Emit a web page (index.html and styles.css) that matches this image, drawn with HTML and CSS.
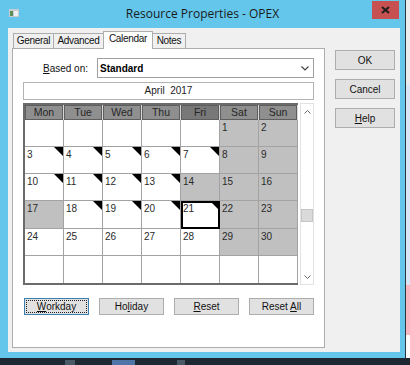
FILE: index.html
```html
<!DOCTYPE html>
<html lang="en">
<head>
  <meta charset="UTF-8">
  <title>Resource Properties - OPEX</title>
  <link rel="stylesheet" href="styles.css">
</head>
<body>

  <div class="screen">
    <div class="window">
      <div class="titlebar">
        <div class="title-left">
          <svg class="app-icon" width="10" height="8" viewBox="0 0 10 8">
            <rect x="0" y="0" width="10" height="8" fill="#c9cdd1"/>
            <rect x="1" y="2" width="3" height="5" fill="#5c8f5a"/>
            <rect x="5" y="2" width="4" height="5" fill="#eef0f2"/>
          </svg>
        </div>
        <div class="title">Resource Properties - OPEX</div>
        <div class="title-right">
          <div class="close">
            <svg width="9" height="8" viewBox="0 0 9 8">
              <path d="M1 1 L8 7 M8 1 L1 7" stroke="#1e1e1e" stroke-width="2"/>
            </svg>
          </div>
        </div>
      </div>

      <div class="client">
        <div class="tab-area">
          <div class="tabs">
            <div class="tab tab-general">General</div>
            <div class="tab tab-advanced">Advanced</div>
            <div class="tab tab-calendar active">Calendar</div>
            <div class="tab tab-notes">Notes</div>
          </div>

          <div class="panel">
            <div class="based-row">
              <label class="based-label"><u>B</u>ased on:</label>
              <div class="combo">
                <span class="combo-value">Standard</span>
                <svg class="chevron" width="8" height="5" viewBox="0 0 8 5">
                  <path d="M0.5 0.5 L4 4 L7.5 0.5" fill="none" stroke="#444" stroke-width="1.2"/>
                </svg>
              </div>
            </div>

            <div class="month">April&nbsp; 2017</div>

            <div class="cal-wrap">
              <div class="calendar">
                <div class="head">Mon</div>
                <div class="head">Tue</div>
                <div class="head">Wed</div>
                <div class="head">Thu</div>
                <div class="head head-sel">Fri</div>
                <div class="head">Sat</div>
                <div class="head">Sun</div>

                <!-- semana 1 -->
                <div class="day"></div>
                <div class="day"></div>
                <div class="day"></div>
                <div class="day"></div>
                <div class="day"></div>
                <div class="day off">1</div>
                <div class="day off">2</div>

                <!-- semana 2 -->
                <div class="day mark">3</div>
                <div class="day mark">4</div>
                <div class="day mark">5</div>
                <div class="day mark">6</div>
                <div class="day mark">7</div>
                <div class="day off">8</div>
                <div class="day off">9</div>

                <!-- semana 3 -->
                <div class="day mark">10</div>
                <div class="day mark">11</div>
                <div class="day mark">12</div>
                <div class="day mark">13</div>
                <div class="day off">14</div>
                <div class="day off">15</div>
                <div class="day off">16</div>

                <!-- semana 4 -->
                <div class="day off">17</div>
                <div class="day mark">18</div>
                <div class="day mark">19</div>
                <div class="day mark">20</div>
                <div class="day mark selected">21</div>
                <div class="day off">22</div>
                <div class="day off">23</div>

                <!-- semana 5 -->
                <div class="day">24</div>
                <div class="day">25</div>
                <div class="day">26</div>
                <div class="day">27</div>
                <div class="day">28</div>
                <div class="day off">29</div>
                <div class="day off">30</div>

                <!-- semana 6 -->
                <div class="day last"></div>
                <div class="day last"></div>
                <div class="day last"></div>
                <div class="day last"></div>
                <div class="day last"></div>
                <div class="day last"></div>
                <div class="day last"></div>
              </div>

              <div class="scrollbar">
                <div class="arrow">
                  <svg width="7" height="4" viewBox="0 0 7 4"><path d="M0.5 3.5 L3.5 0.5 L6.5 3.5" fill="none" stroke="#666" stroke-width="1"/></svg>
                </div>
                <div class="track"><div class="thumb"></div></div>
                <div class="arrow">
                  <svg width="7" height="4" viewBox="0 0 7 4"><path d="M0.5 0.5 L3.5 3.5 L6.5 0.5" fill="none" stroke="#666" stroke-width="1"/></svg>
                </div>
              </div>
            </div>

            <div class="day-buttons">
              <button class="btn btn-day btn-focus"><u>W</u>orkday</button>
              <button class="btn btn-day">Ho<u>l</u>iday</button>
              <button class="btn btn-day"><u>R</u>eset</button>
              <button class="btn btn-day">Reset <u>A</u>ll</button>
            </div>
          </div>
        </div>

        <div class="side-buttons">
          <button class="btn btn-side">OK</button>
          <button class="btn btn-side">Cancel</button>
          <button class="btn btn-side"><u>H</u>elp</button>
        </div>
      </div>
    </div>

    <div class="edge"></div>

    <div class="side">
      <div class="side-top"></div>
      <div class="side-blue"></div>
      <div class="side-pink"></div>
      <div class="side-white"></div>
    </div>
  </div>

  <div class="taskbar">
    <span class="task task-a"></span>
    <span class="task task-b"></span>
    <span class="task task-c"></span>
  </div>

</body>
</html>
```

FILE: styles.css
```css
body {
  margin: 0;
  width: 410px;
  height: 365px;
  overflow: hidden;
  background-color: #1d2833;
  font-family: "Liberation Sans", Arial, sans-serif;
  font-size: 10px;
  color: #000;
}
.screen {
  display: flex;
  height: 358px;
}
.window {
  width: 405px;
  display: flex;
  flex-direction: column;
  background-color: #63c6ea;
}
.titlebar {
  height: 28px;
  display: grid;
  grid-template-columns: 1fr auto 1fr;
  align-items: start;
}
.title-left {
  padding: 9px 0 0 9px;
}
.app-icon {
  display: block;
}
.title {
  font-family: "Open Sans", sans-serif;
  font-size: 12px;
  color: #1b1b1b;
  line-height: 16px;
  padding-top: 6px;
}
.title-right {
  display: flex;
  justify-content: flex-end;
  padding-right: 6px;
}
.close {
  width: 27px;
  height: 18px;
  margin-top: 1px;
  background-color: #c75050;
  display: flex;
  align-items: center;
  justify-content: center;
}
.client {
  height: 324px;
  margin: 0 5px 0 8px;
  background-color: #f0f0f0;
  display: flex;
  gap: 10px;
  padding: 3px 5px 0 4px;
  box-sizing: border-box;
}
.tab-area {
  width: 313px;
}
.tabs {
  height: 17px;
  display: flex;
  align-items: flex-end;
  padding-left: 1px;
}
.tab {
  box-sizing: border-box;
  height: 15px;
  border: 1px solid #adadad;
  border-bottom: none;
  background-color: #f0f0f0;
  margin-right: -1px;
  text-align: center;
  line-height: 14px;
  color: #111;
  letter-spacing: -0.3px;
}
.tab-general { width: 41px; }
.tab-advanced { width: 51px; }
.tab-calendar { width: 50px; }
.tab-notes { width: 34px; }
.tab.active {
  position: relative;
  z-index: 1;
  height: 18px;
  margin-bottom: -1px;
  background-color: #fff;
  line-height: 14px;
}
.panel {
  height: 300px;
  box-sizing: border-box;
  border: 1px solid #adadad;
  background-color: #fff;
  padding: 9px 10px 0 10px;
}
.based-row {
  display: flex;
  align-items: center;
  height: 20px;
}
.based-label {
  width: 74px;
  text-align: right;
  padding-right: 9px;
  box-sizing: border-box;
  color: #111;
}
.combo {
  flex: 1;
  height: 20px;
  box-sizing: border-box;
  border: 1px solid #a0a0a0;
  display: flex;
  align-items: center;
  justify-content: space-between;
  padding: 0 4px 0 2px;
}
.combo-value {
  font-weight: bold;
}
.month {
  margin-top: 4px;
  height: 18px;
  box-sizing: border-box;
  border: 1px solid #b4b4b4;
  text-align: center;
  line-height: 16px;
  color: #222;
}
.cal-wrap {
  margin-top: 3px;
  display: flex;
  gap: 2px;
  height: 182px;
}
.calendar {
  width: 275px;
  box-sizing: border-box;
  border: 2px solid #6b6b6b;
  border-right: none;
  display: grid;
  grid-template-columns: repeat(7, 39px);
  grid-template-rows: 15px repeat(6, 1fr);
  background-color: #fff;
}
.head {
  background-color: #8f8f8f;
  color: #262626;
  text-align: center;
  line-height: 14px;
  font-size: 10.5px;
  border-right: 1px solid #d8d8d8;
  box-shadow: inset 0 0 0 1px #5e5e5e;
}
.head-sel {
  background-color: #787878;
}
.day {
  position: relative;
  border-right: 1px solid #a3a3a3;
  border-bottom: 1px solid #a3a3a3;
  padding: 2px 0 0 2px;
  font-size: 10px;
  color: #2a2a2a;
  line-height: 11px;
}
.day.last {
  border-bottom: none;
}
.off {
  background-color: #c0c0c0;
}
.mark::after {
  content: "";
  position: absolute;
  top: 0;
  right: 0;
  border-top: 9px solid #000;
  border-left: 9px solid transparent;
}
.selected {
  outline: 2px solid #000;
  outline-offset: -2px;
}
.scrollbar {
  width: 14px;
  box-sizing: border-box;
  border: 1px solid #e2e2e2;
  display: flex;
  flex-direction: column;
  background-color: #fff;
}
.arrow {
  height: 15px;
  display: flex;
  align-items: center;
  justify-content: center;
}
.track {
  flex: 1;
  padding-top: 90px;
}
.thumb {
  height: 13px;
  background-color: #dadada;
  border: 1px solid #c6c6c6;
  box-sizing: border-box;
}
.day-buttons {
  margin-top: 13px;
  display: flex;
  justify-content: space-between;
  padding-left: 1px;
}
.btn {
  font-family: "Liberation Sans", Arial, sans-serif;
  font-size: 10px;
  background-color: #e1e1e1;
  border: 1px solid #adadad;
  color: #111;
  padding: 0;
  box-sizing: border-box;
}
.btn-day {
  width: 65px;
  height: 17px;
}
.btn-focus {
  border-color: #3c7fb1;
  outline: 1px dotted #222;
  outline-offset: -3px;
}
.side-buttons {
  display: flex;
  flex-direction: column;
  gap: 9px;
  padding-top: 19px;
}
.btn-side {
  width: 60px;
  height: 20px;
}
.edge {
  width: 1px;
  background-color: #2a343e;
}
.side {
  width: 4px;
  display: flex;
  flex-direction: column;
}
.side-top {
  height: 85px;
  background-color: #ececec;
}
.side-blue {
  height: 200px;
  background-color: #dbe6f5;
}
.side-pink {
  height: 50px;
  background-color: #f7b6c0;
}
.side-white {
  flex: 1;
  background-color: #fafafa;
}
.taskbar {
  height: 7px;
  display: flex;
  align-items: flex-end;
}
.task {
  display: block;
  height: 5px;
}
.task-a {
  width: 10px;
  margin-left: 65px;
  background-color: #4a5966;
}
.task-b {
  width: 23px;
  margin-left: 37px;
  background-color: #4f74a8;
}
.task-c {
  width: 8px;
  margin-left: 42px;
  background-color: #4a5966;
}
```
